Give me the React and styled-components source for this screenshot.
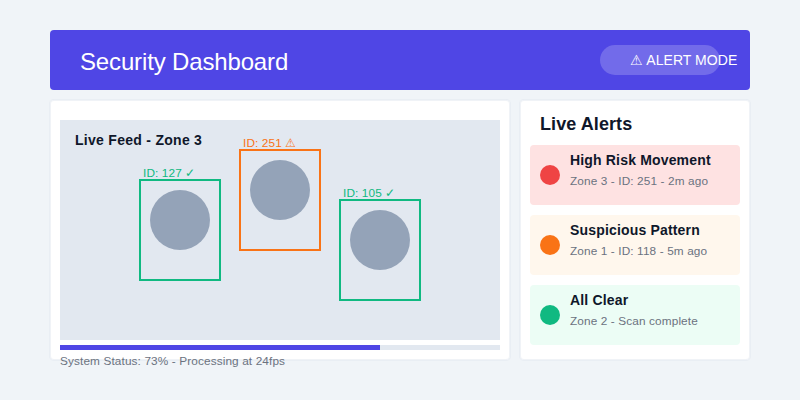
import React from "react";
import styled, { createGlobalStyle } from "styled-components";

const GlobalStyle = createGlobalStyle`
  body {
    margin: 0;
    background: #f0f4f8;
    font-family: "Liberation Sans", Arial, sans-serif;
  }
`;

const Page = styled.div`
  box-sizing: border-box;
  width: 800px;
  height: 400px;
  padding: 30px 50px;
  display: flex;
  flex-direction: column;
  gap: 10px;
  background: #f0f4f8;
  overflow: hidden;
`;

const Header = styled.header`
  box-sizing: border-box;
  height: 60px;
  padding: 0 30px;
  display: flex;
  align-items: center;
  justify-content: space-between;
  background: #4f46e5;
  border-radius: 4px;
  color: #fff;
`;

const Title = styled.h1`
  margin: 0;
  padding-top: 3px;
  font-size: 24px;
  font-weight: 400;
  line-height: 27px;
  letter-spacing: -0.15px;
`;

const ModeBadge = styled.div`
  box-sizing: border-box;
  width: 120px;
  height: 30px;
  padding: 7px 0 0 30px;
  border-radius: 15px;
  background: rgba(255, 255, 255, 0.2);
  font-size: 14px;
  line-height: 16px;
  letter-spacing: 0.06px;
  white-space: nowrap;
`;

const Columns = styled.main`
  display: grid;
  grid-template-columns: 460px 230px;
  gap: 10px;
`;

const Panel = styled.section`
  box-sizing: border-box;
  height: 260px;
  padding: ${(p) => p.$padding};
  background: #fff;
  border-radius: 4px;
  box-shadow: 0 0 0 1px rgba(226, 232, 240, 0.5),
    inset 0 0 0 1px rgba(226, 232, 240, 0.5);
`;

const Feed = styled.div`
  box-sizing: border-box;
  position: relative;
  height: 220px;
  padding: 12px 15px;
  background: #e2e8f0;
`;

const FeedTitle = styled.h2`
  margin: 0;
  font-size: 14px;
  line-height: 16px;
  letter-spacing: 0.28px;
  color: #0f172a;
`;

const Detection = styled.div`
  position: absolute;
  left: ${(p) => p.$x}px;
  top: ${(p) => p.$y}px;
  width: 82px;
  color: ${(p) => p.$color};
`;

const DetectionLabel = styled.div`
  height: 13px;
  padding-left: 4px;
  font-size: 11.8px;
  line-height: 14px;
  letter-spacing: 0.12px;
  white-space: nowrap;
`;

const DetectionFrame = styled.div`
  box-sizing: border-box;
  height: 102px;
  padding: 9px;
  border: 2px solid currentColor;
`;

const Subject = styled.div`
  width: 60px;
  height: 60px;
  border-radius: 50%;
  background: #94a3b8;
`;

const Track = styled.div`
  height: 5px;
  margin-top: 5px;
  background: #e2e8f0;
`;

const Progress = styled.div`
  width: 320px;
  height: 5px;
  background: #4f46e5;
`;

const Status = styled.div`
  margin-top: 4px;
  font-size: 11.8px;
  line-height: 14px;
  letter-spacing: 0.12px;
  color: #6b7280;
`;

const AlertsTitle = styled.h2`
  margin: 0 0 11px 10px;
  font-size: 18px;
  line-height: 20px;
  letter-spacing: 0.08px;
  color: #0f172a;
`;

const AlertList = styled.div`
  display: flex;
  flex-direction: column;
  gap: 10px;
`;

const AlertCard = styled.article`
  box-sizing: border-box;
  height: 60px;
  padding: 0 10px;
  display: flex;
  align-items: center;
  gap: 10px;
  border-radius: 4px;
  background: ${(p) => p.$background};
`;

const Dot = styled.span`
  flex: none;
  width: 20px;
  height: 20px;
  border-radius: 50%;
  background: ${(p) => p.$color};
`;

const AlertText = styled.div`
  align-self: flex-start;
  padding-top: 7px;
  display: flex;
  flex-direction: column;
  gap: 6px;
  white-space: nowrap;
`;

const AlertName = styled.strong`
  font-size: 14px;
  line-height: 16px;
  letter-spacing: 0.17px;
  color: #0f172a;
`;

const AlertMeta = styled.span`
  font-size: 11.8px;
  line-height: 14px;
  letter-spacing: 0.12px;
  color: #6b7280;
`;

const detections = [
  { label: "ID: 127 ✓", x: 79, y: 46, color: "#10b981" },
  { label: "ID: 251 ⚠", x: 179, y: 16, color: "#f97316" },
  { label: "ID: 105 ✓", x: 279, y: 66, color: "#10b981" },
];

const alerts = [
  { name: "High Risk Movement", meta: "Zone 3 - ID: 251 - 2m ago", color: "#ef4444", background: "#fee2e2" },
  { name: "Suspicious Pattern", meta: "Zone 1 - ID: 118 - 5m ago", color: "#f97316", background: "#fff7ed" },
  { name: "All Clear", meta: "Zone 2 - Scan complete", color: "#10b981", background: "#ecfdf5" },
];

export default function App() {
  return (
    <Page>
      <GlobalStyle />
      <Header>
        <Title>Security Dashboard</Title>
        <ModeBadge>⚠ ALERT MODE</ModeBadge>
      </Header>
      <Columns>
        <Panel $padding="20px 10px 0">
          <Feed>
            <FeedTitle>Live Feed - Zone 3</FeedTitle>
            {detections.map((d) => (
              <Detection key={d.label} $x={d.x} $y={d.y} $color={d.color}>
                <DetectionLabel>{d.label}</DetectionLabel>
                <DetectionFrame>
                  <Subject />
                </DetectionFrame>
              </Detection>
            ))}
          </Feed>
          <Track>
            <Progress />
          </Track>
          <Status>System Status: 73% - Processing at 24fps</Status>
        </Panel>
        <Panel $padding="14px 10px 0">
          <AlertsTitle>Live Alerts</AlertsTitle>
          <AlertList>
            {alerts.map((a) => (
              <AlertCard key={a.name} $background={a.background}>
                <Dot $color={a.color} />
                <AlertText>
                  <AlertName>{a.name}</AlertName>
                  <AlertMeta>{a.meta}</AlertMeta>
                </AlertText>
              </AlertCard>
            ))}
          </AlertList>
        </Panel>
      </Columns>
    </Page>
  );
}
